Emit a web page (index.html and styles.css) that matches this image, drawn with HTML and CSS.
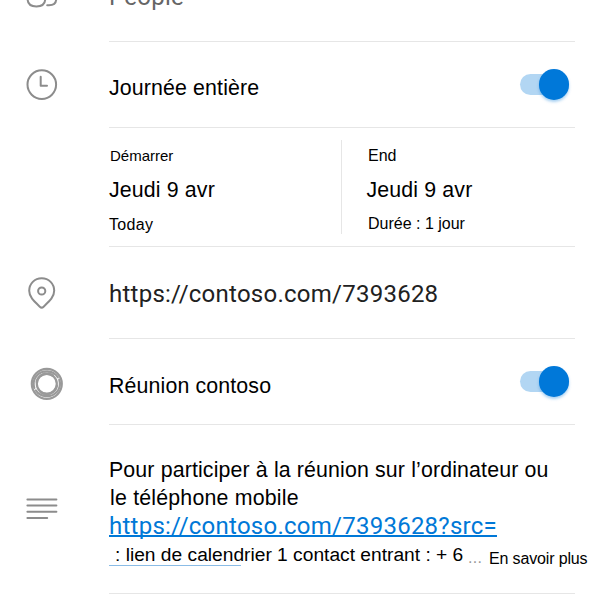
FILE: index.html
```html
<!DOCTYPE html>
<html lang="fr">
<head>
<meta charset="utf-8">
<title>Réunion</title>
<link rel="stylesheet" href="styles.css">
</head>
<body>
<main class="form">
  <section class="row row-people">
    <svg class="icon" width="109" height="41" viewBox="0 0 109 41"><path d="M27.6 -4V-1C27.6 4 31 6.4 36.4 6.4S45.2 4 45.2 -1V-4M47.2 5.2H49C53.5 5.2 56.2 3 56.2 -1V-4"/></svg>
    <div class="cell"><p class="people">People</p></div>
  </section>
  <section class="row row-day">
    <svg class="icon" width="109" height="85" viewBox="0 0 109 85"><circle cx="41.8" cy="42.6" r="14.3"/><path d="M40.7 34.7V43.8H47"/></svg>
    <div class="cell"><p class="label day">Journée entière</p><span class="toggle"></span></div>
  </section>
  <section class="row row-dates">
    <div class="cell dates">
      <div class="date start"><p class="small demarrer">Démarrer</p><p class="label">Jeudi 9 avr</p><p class="small today">Today</p></div>
      <div class="date end"><p class="small">End</p><p class="label">Jeudi 9 avr</p><p class="small">Durée : 1 jour</p></div>
    </div>
  </section>
  <section class="row row-place">
    <svg class="icon" width="109" height="91" viewBox="0 0 109 91"><path d="M41.7 31.3C34.6 31.3 29.2 36.7 29.2 43.8C29.2 50.3 34.5 54.7 39.8 59.7Q41.7 61.5 43.6 59.7C48.9 54.7 54.2 50.3 54.2 43.8C54.2 36.7 48.8 31.3 41.7 31.3Z"/><circle cx="41.7" cy="44" r="3.6"/></svg>
    <div class="cell"><p class="url">https://contoso.com/7393628</p></div>
  </section>
  <section class="row row-meeting">
    <svg class="icon swirl" width="109" height="85" viewBox="0 0 109 85"><circle cx="46.8" cy="44.8" r="15"/><circle cx="46.8" cy="44.8" r="10"/><path d="M34.3 49C31.5 39.5 38.5 32 47.5 32.4C52 32.6 55.5 34.6 57.8 38.2M59.3 40.6C62.1 50.1 55.1 57.6 46.1 57.2C41.6 57 38.1 55 35.8 51.4M36.6 43C38 35.5 46 32.5 53 36.5M57 46.6C55.6 54.1 47.6 57.1 40.6 53.1"/></svg>
    <div class="cell"><p class="label meeting">Réunion contoso</p><span class="toggle"></span></div>
  </section>
  <section class="row row-notes">
    <svg class="icon" width="109" height="168" viewBox="0 0 109 168"><path d="M27.4 74.5H56.4M27.4 80.6H56.4M27.4 86.8H56.4M27.4 93H47.2"/></svg>
    <div class="cell notes">
      <p class="label join">Pour participer à la réunion sur l’ordinateur ou</p>
      <p class="label mobile">le téléphone mobile</p>
      <p><a class="url link">https://contoso.com/7393628?src=</a></p>
      <div class="last"><p class="calendar">: lien de calendrier 1 contact entrant : + 6</p><span class="dots">...</span><span class="more">En savoir plus</span></div>
    </div>
  </section>
</main>
</body>
</html>
```
FILE: styles.css
```css
* { box-sizing: border-box; }
body { margin: 0; background: #fff; color: #000; font-family: "Liberation Sans", sans-serif; overflow: hidden; }
p { margin: 0; white-space: nowrap; }
.form { height: 599px; overflow: hidden; }
.row { display: grid; grid-template-columns: 109px 466px; }
.row-people { height: 42px; }
.row-day, .row-meeting { height: 86px; }
.row-dates { height: 119px; }
.row-place { height: 92px; }
.row-notes { height: 169px; }
.icon { display: block; fill: none; stroke: #8c8c8c; stroke-width: 2; stroke-linecap: round; stroke-linejoin: round; }
.swirl { stroke: #999; stroke-width: 2.2; }
.cell { grid-column: 2; display: flex; justify-content: space-between; align-items: flex-start; border-bottom: 1px solid #e6e6e6; }
.label { font-size: 21.33px; line-height: 28px; letter-spacing: .14px; }
.small { font-size: 16px; line-height: 20px; }
.people { font-family: Roboto, sans-serif; font-size: 24px; line-height: 28px; letter-spacing: .25px; color: #666; margin-top: -17px; }
.day { margin-top: 32px; }
.meeting { margin-top: 33px; }
.toggle { width: 49px; height: 21px; margin: 32px 5.7px 0 0; border-radius: 11px; background: #b2d6f3; display: flex; align-items: center; justify-content: flex-end; }
.toggle::after { content: ""; width: 30.6px; height: 30.6px; border-radius: 50%; background: #0078d9; box-shadow: 0 2px 3px rgba(0, 120, 217, .35); flex: none; }
.date { height: 94px; margin-top: 12px; display: flex; flex-direction: column; gap: 10px; padding-top: 6px; }
.start { width: 233px; border-right: 1px solid #e6e6e6; }
.today { margin-top: 1px; letter-spacing: .3px; }
.end { flex: 1; padding-left: 24.5px; }
.end .small { padding-left: 1.5px; }
.demarrer { font-size: 15px; padding-left: 1px; }
.url { font-family: Roboto, sans-serif; font-size: 24px; line-height: 28px; letter-spacing: .25px; color: #212121; }
.row-place .url { margin-top: 33px; }
.notes { flex-direction: column; justify-content: flex-start; padding-top: 31px; }
.mobile { padding-left: 1px; letter-spacing: .2px; }
.link { color: #0078d7; text-decoration: underline; text-decoration-thickness: 1.5px; text-underline-offset: 1px; text-decoration-skip-ink: none; }
.last { display: flex; align-items: flex-start; white-space: nowrap; padding-top: 1px; }
.calendar { width: 354px; height: 25px; padding-left: 6px; font-size: 19.2px; line-height: 28px; background: linear-gradient(#8abce6, #8abce6) 0 100% / 132px 1px no-repeat; }
.dots { width: 26px; padding-left: 5px; font-size: 16px; line-height: 34px; letter-spacing: .3px; color: #999; }
.more { font-size: 16px; line-height: 36px; letter-spacing: -.15px; }
```
